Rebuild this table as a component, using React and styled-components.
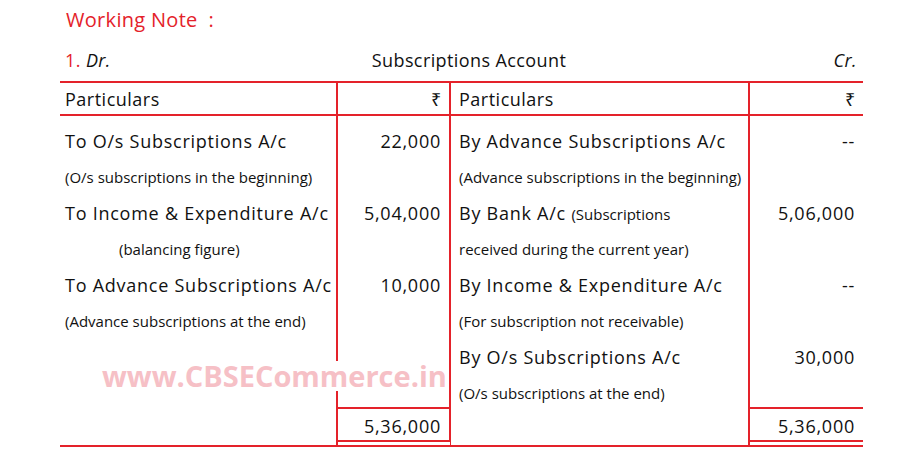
import React from "react";
import styled, { createGlobalStyle } from "styled-components";

const RED = "#e4222a";

const Global = createGlobalStyle`
    body {
        margin: 0;
        background: #fff;
        color: #111;
        font-family: "Comic Sans MS", "Open Sans", sans-serif;
    }
`;

const Page = styled.div`
    width: 803px;
    padding: 7px 0 0 60px;
`

const Title = styled.div`
    color: ${RED};
    font-size: 20px;
    letter-spacing: 0.3px;
    padding-left: 6px;
    height: 26px;
    line-height: 26px;
`

const Heading = styled.div`
    display: grid;
    grid-template-columns: 1fr auto 1fr;
    align-items: center;
    height: 48px;
    box-sizing: border-box;
    padding: 6px 6px 0 5px;
    font-size: 18px;
    letter-spacing: 0.4px;
`

const Num = styled.span`
    color: ${RED};
`

const Italic = styled.span`
    font-style: italic;
    text-align: ${p => p.$right ? "right" : "left"};
`

const AccountName = styled.span`
    padding-left: 16px;
`

const Table = styled.div`
    position: relative;
    display: grid;
    grid-template-columns: 278px 113px 299px 113px;
    grid-template-rows: 33px 291px 40px;
    border-top: 2px solid ${RED};
`

const Cell = styled.div`
    box-sizing: border-box;
    border-right: ${p => p.$line ? `2px solid ${RED}` : "none"};
    padding: ${p => p.$amount ? "0 8px 0 0" : `0 0 0 ${p.$pad || 0}px`};
    text-align: ${p => p.$amount ? "right" : "left"};
`

const HeadCell = styled(Cell)`
    display: flex;
    align-items: center;
    justify-content: ${p => p.$amount ? "flex-end" : "flex-start"};
    border-bottom: 2px solid ${RED};
    font-size: 18px;
    letter-spacing: 0.5px;
`

const BodyCell = styled(Cell)`
    padding-top: 7px;
`

const MainLine = styled.div`
    height: 36px;
    line-height: 36px;
    font-size: 18px;
    letter-spacing: 0.75px;
    white-space: nowrap;
`

const NoteLine = styled.div`
    height: 36px;
    line-height: 36px;
    font-size: 15px;
    white-space: nowrap;
    padding-left: ${p => p.$indent || 0}px;
`

const Small = styled.span`
    font-size: 15px;
    letter-spacing: 0;
`

const TotalCell = styled(Cell)`
    font-size: 18px;
    letter-spacing: 0.75px;
    border-bottom: ${p => p.$amount ? `7px double ${RED}` : `2px solid ${RED}`};
    border-top: ${p => p.$amount ? `2px solid ${RED}` : "none"};
    padding-top: ${p => p.$amount ? "3px" : "0"};
    line-height: 28px;
`

const Watermark = styled.div`
    position: absolute;
    left: 42px;
    top: 278px;
    background: #fff;
    color: #f6c0c6;
    font-family: "Open Sans", sans-serif;
    font-weight: 700;
    font-size: 29px;
    line-height: 30px;
    white-space: nowrap;
`

const left = [
    { main: "To O/s Subscriptions A/c", amt: "22,000", note: "(O/s subscriptions in the beginning)" },
    { main: "To Income & Expenditure A/c", amt: "5,04,000", note: "(balancing figure)", indent: 54 },
    { main: "To Advance Subscriptions A/c", amt: "10,000", note: "(Advance subscriptions at the end)" },
];

const right = [
    { main: "By Advance Subscriptions A/c", amt: "--", note: "(Advance subscriptions in the beginning)" },
    { main: <>By Bank A/c <Small>(Subscriptions</Small></>, amt: "5,06,000", note: "received during the current year)" },
    { main: "By Income & Expenditure A/c", amt: "--", note: "(For subscription not receivable)" },
    { main: "By O/s Subscriptions A/c", amt: "30,000", note: "(O/s subscriptions at the end)" },
];

const Side = ({ items, pad, divider }) => (
    <>
        <BodyCell $pad={pad} $line>
            {items.map((it, i) => (
                <React.Fragment key={i}>
                    <MainLine>{it.main}</MainLine>
                    <NoteLine $indent={it.indent}>{it.note}</NoteLine>
                </React.Fragment>
            ))}
        </BodyCell>
        <BodyCell $amount $line={divider}>
            {items.map((it, i) => (
                <React.Fragment key={i}>
                    <MainLine>{it.amt}</MainLine>
                    <NoteLine />
                </React.Fragment>
            ))}
        </BodyCell>
    </>
);

export default function App() {
    return <Page>
        <Global />
        <Title>Working Note&nbsp; :</Title>
        <Heading>
            <span><Num>1.</Num> <Italic>Dr.</Italic></span>
            <AccountName>Subscriptions Account</AccountName>
            <Italic $right>Cr.</Italic>
        </Heading>
        <Table>
            <HeadCell $pad={5} $line>Particulars</HeadCell>
            <HeadCell $amount $line>₹</HeadCell>
            <HeadCell $pad={8} $line>Particulars</HeadCell>
            <HeadCell $amount>₹</HeadCell>

            <Side items={left} pad={5} divider />
            <Side items={right} pad={8} />

            <TotalCell $line />
            <TotalCell $amount $line>5,36,000</TotalCell>
            <TotalCell $line />
            <TotalCell $amount>5,36,000</TotalCell>

            <Watermark>www.CBSECommerce.in</Watermark>
        </Table>
    </Page>
}
